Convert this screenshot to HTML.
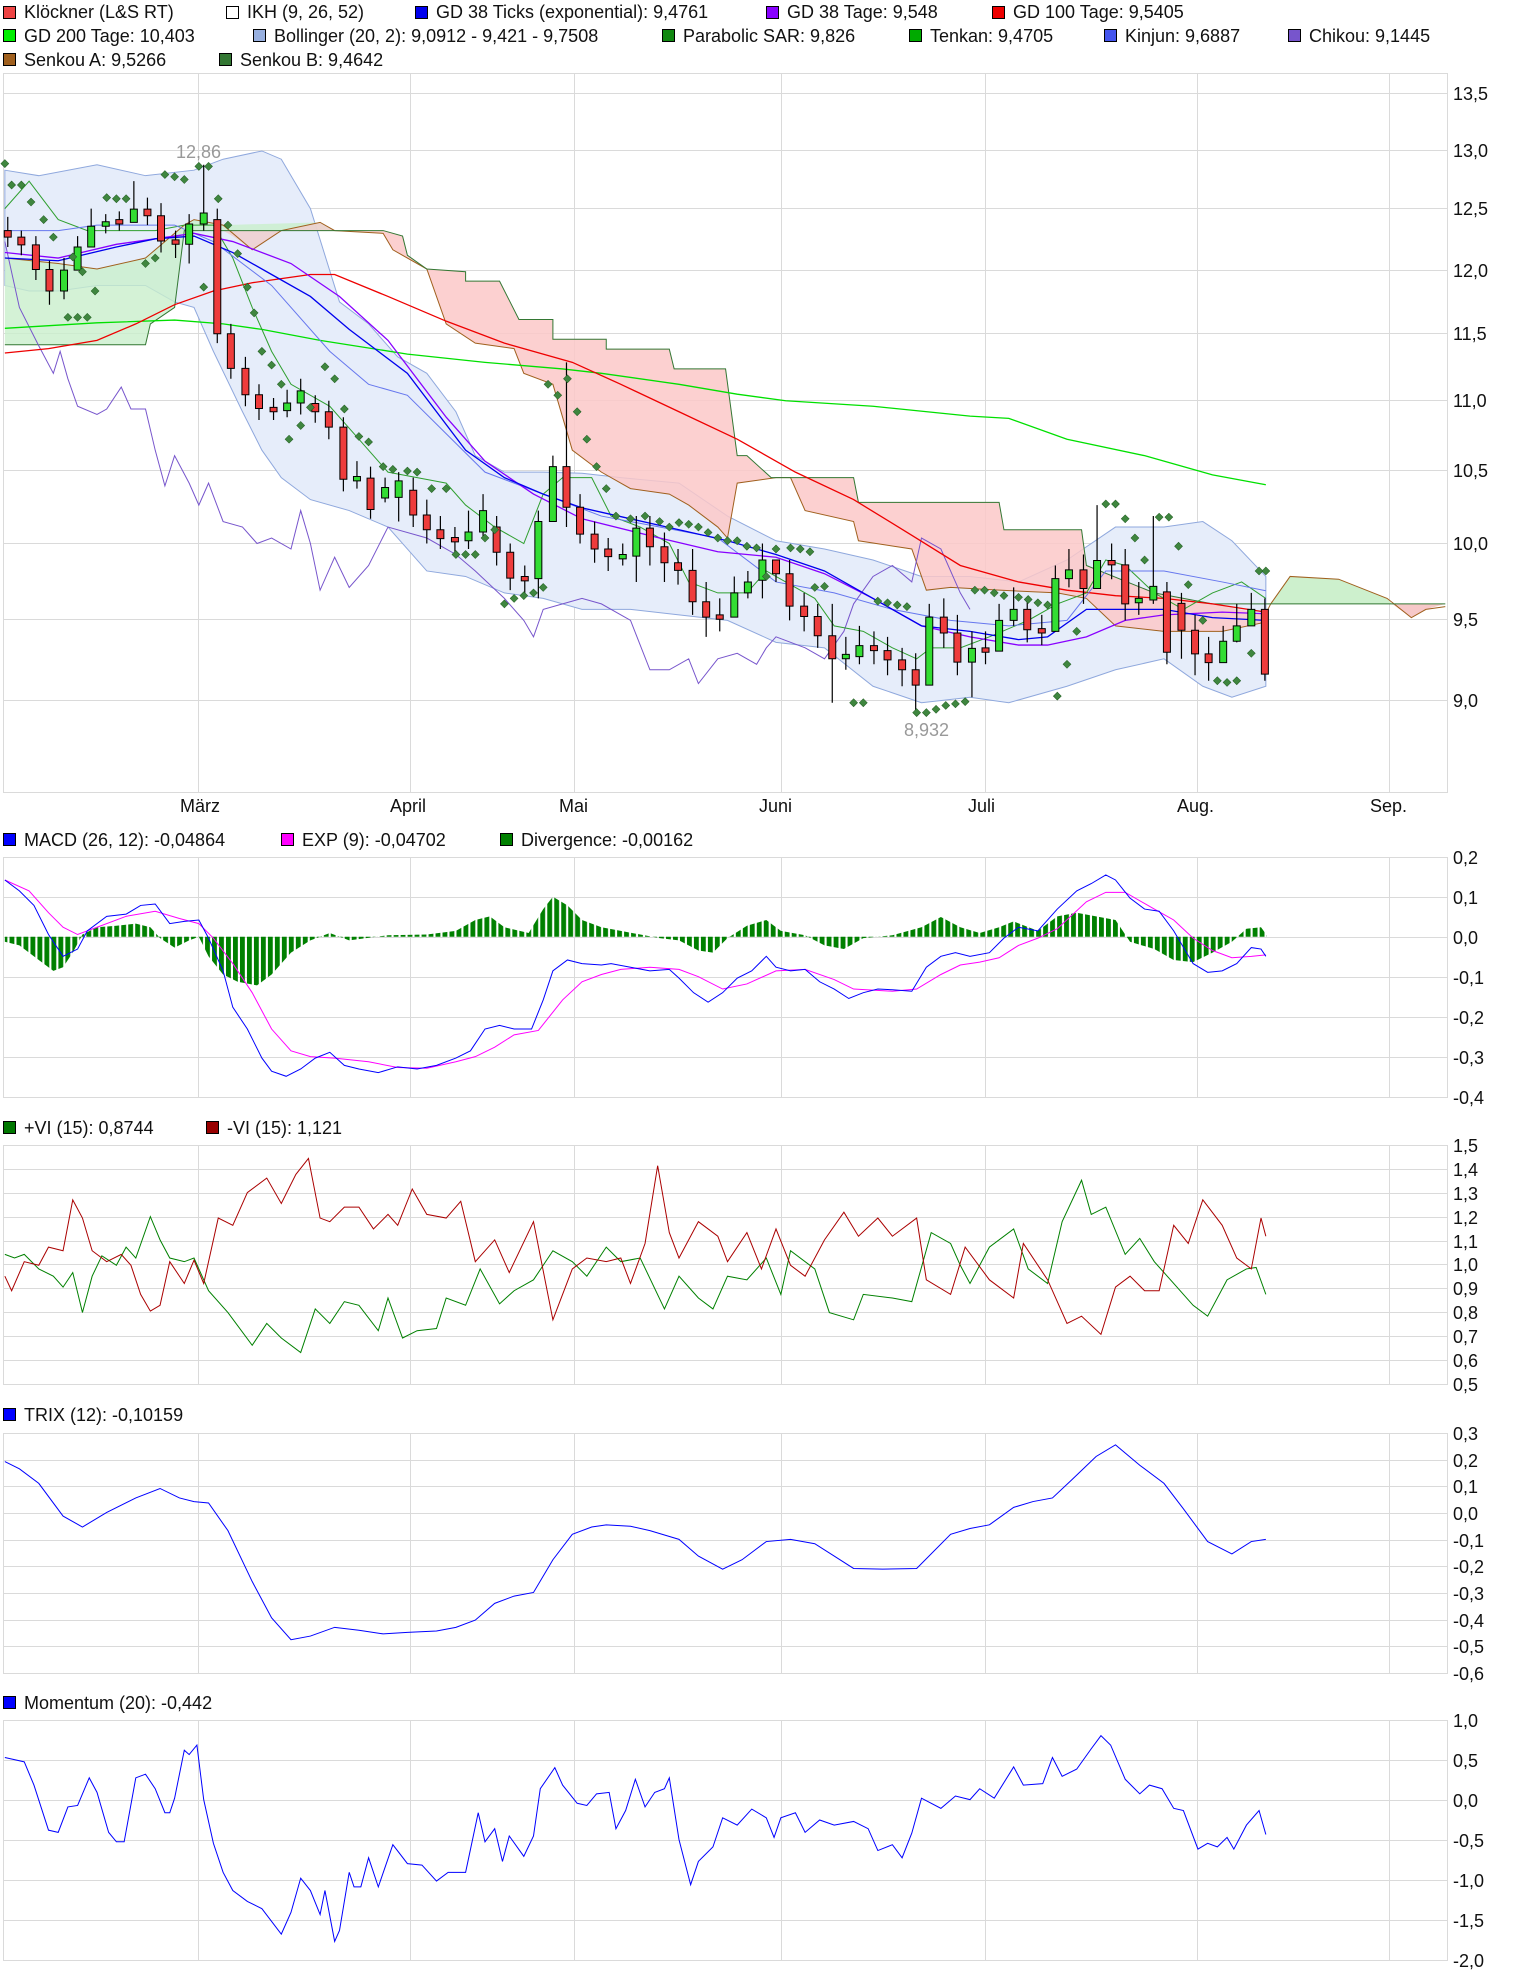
<!DOCTYPE html>
<html><head><meta charset="utf-8">
<style>
html,body{margin:0;padding:0;background:#fff;}
svg{display:block;}
text{font-family:"Liberation Sans",Arial,sans-serif;font-size:18px;fill:#111;}
.s *{vector-effect:non-scaling-stroke;}
.g{fill:#33dd33;stroke:#000;stroke-width:1;}
.r{fill:#ee3c3c;stroke:#000;stroke-width:1;}
</style></head>
<body>
<svg width="1520" height="1981" viewBox="0 0 1520 1981" xmlns="http://www.w3.org/2000/svg">
<defs>
<marker id="dm" markerUnits="userSpaceOnUse" markerWidth="20" markerHeight="30" refX="0" refY="0" overflow="visible" orient="0">
<path d="M0,-7.3 L4.12,0 L0,7.3 L-4.12,0Z" fill="#3f863f" stroke="#1d5a1d" stroke-width="0.6"/>
</marker>
<pattern id="bars" patternUnits="userSpaceOnUse" width="7.2" height="2000" x="2.6">
<rect x="0" y="0" width="5" height="2000" fill="#008000"/>
</pattern>
</defs>
<!-- legends -->
<g stroke="#000" stroke-width="1">
<rect x="3.5" y="6.5" width="12" height="12" fill="#ee4444"/>
<rect x="226.5" y="6.5" width="12" height="12" fill="#fff"/>
<rect x="415.5" y="6.5" width="12" height="12" fill="#0000ee"/>
<rect x="766.5" y="6.5" width="12" height="12" fill="#8800ff"/>
<rect x="992.5" y="6.5" width="12" height="12" fill="#ee0000"/>
<rect x="3.5" y="29.5" width="12" height="12" fill="#00ee00"/>
<rect x="253.5" y="29.5" width="12" height="12" fill="#98b0e0"/>
<rect x="662.5" y="29.5" width="12" height="12" fill="#118811"/>
<rect x="909.5" y="29.5" width="12" height="12" fill="#00aa00"/>
<rect x="1104.5" y="29.5" width="12" height="12" fill="#4455ee"/>
<rect x="1288.5" y="29.5" width="12" height="12" fill="#7755cc"/>
<rect x="3.5" y="53.5" width="12" height="12" fill="#a0601e"/>
<rect x="219.5" y="53.5" width="12" height="12" fill="#337733"/>
<rect x="3.5" y="833.5" width="12" height="12" fill="#0000ff"/>
<rect x="281.5" y="833.5" width="12" height="12" fill="#ff00ff"/>
<rect x="500.5" y="833.5" width="12" height="12" fill="#008000"/>
<rect x="3.5" y="1121.5" width="12" height="12" fill="#007700"/>
<rect x="206.5" y="1121.5" width="12" height="12" fill="#990000"/>
<rect x="3.5" y="1408.5" width="12" height="12" fill="#0000ff"/>
<rect x="3.5" y="1696.5" width="12" height="12" fill="#0000ff"/>
</g>
<text x="24" y="18">Klöckner (L&amp;S RT)</text>
<text x="247" y="18">IKH (9, 26, 52)</text>
<text x="436" y="18">GD 38 Ticks (exponential): 9,4761</text>
<text x="787" y="18">GD 38 Tage: 9,548</text>
<text x="1013" y="18">GD 100 Tage: 9,5405</text>
<text x="24" y="42">GD 200 Tage: 10,403</text>
<text x="274" y="42">Bollinger (20, 2): 9,0912 - 9,421 - 9,7508</text>
<text x="683" y="42">Parabolic SAR: 9,826</text>
<text x="930" y="42">Tenkan: 9,4705</text>
<text x="1125" y="42">Kinjun: 9,6887</text>
<text x="1309" y="42">Chikou: 9,1445</text>
<text x="24" y="66">Senkou A: 9,5266</text>
<text x="240" y="66">Senkou B: 9,4642</text>
<text x="24" y="846">MACD (26, 12): -0,04864</text>
<text x="302" y="846">EXP (9): -0,04702</text>
<text x="521" y="846">Divergence: -0,00162</text>
<text x="24" y="1134">+VI (15): 0,8744</text>
<text x="227" y="1134">-VI (15): 1,121</text>
<text x="24" y="1421">TRIX (12): -0,10159</text>
<text x="24" y="1709">Momentum (20): -0,442</text>

<!-- grids -->
<g stroke="#dadada" stroke-width="1" fill="none">
<path d="M3 93.5H1447M3 150.5H1447M3 208.5H1447M3 270.5H1447M3 333.5H1447M3 400.5H1447M3 470.5H1447M3 543.5H1447M3 619.5H1447M3 700.5H1447"/>
<path d="M3 897.5H1447M3 937.5H1447M3 977.5H1447M3 1017.5H1447M3 1057.5H1447"/>
<path d="M3 1169.5H1447M3 1193.5H1447M3 1217.5H1447M3 1241.5H1447M3 1264.5H1447M3 1288.5H1447M3 1312.5H1447M3 1336.5H1447M3 1360.5H1447"/>
<path d="M3 1460.5H1447M3 1486.5H1447M3 1513.5H1447M3 1540.5H1447M3 1566.5H1447M3 1593.5H1447M3 1620.5H1447M3 1646.5H1447"/>
<path d="M3 1760.5H1447M3 1800.5H1447M3 1840.5H1447M3 1880.5H1447M3 1920.5H1447"/>
<path d="M198.5 73V792M410.5 73V792M574.5 73V792M781.5 73V792M985.5 73V792M1197.5 73V792M1389.5 73V792"/>
<path d="M198.5 857V1097M410.5 857V1097M574.5 857V1097M781.5 857V1097M985.5 857V1097M1197.5 857V1097M1389.5 857V1097"/>
<path d="M198.5 1145V1384M410.5 1145V1384M574.5 1145V1384M781.5 1145V1384M985.5 1145V1384M1197.5 1145V1384M1389.5 1145V1384"/>
<path d="M198.5 1433V1673M410.5 1433V1673M574.5 1433V1673M781.5 1433V1673M985.5 1433V1673M1197.5 1433V1673M1389.5 1433V1673"/>
<path d="M198.5 1720V1960M410.5 1720V1960M574.5 1720V1960M781.5 1720V1960M985.5 1720V1960M1197.5 1720V1960M1389.5 1720V1960"/>
<rect x="3.5" y="73.5" width="1444" height="719"/>
<rect x="3.5" y="857.5" width="1444" height="240"/>
<rect x="3.5" y="1145.5" width="1444" height="239"/>
<rect x="3.5" y="1433.5" width="1444" height="240"/>
<rect x="3.5" y="1720.5" width="1444" height="240"/>
</g>

<!-- main chart data -->
<g class="s" transform="scale(0.97 0.549)">
<polygon fill="#e6edfa" stroke="#8fa8dd" stroke-width="1" points="5,310 40,320 100,300 150,320 200,310 230,290 270,275 290,290 320,380 350,550 380,590 410,650 440,680 470,750 490,830 520,860 560,860 600,862 640,870 700,880 750,940 800,985 850,1000 900,1020 950,1050 1000,1050 1050,1060 1100,1020 1150,960 1200,960 1240,950 1270,985 1305,1050 1305,1250 1270,1270 1240,1250 1200,1200 1150,1220 1100,1250 1040,1280 1000,1270 950,1280 900,1250 850,1180 800,1170 750,1130 700,1120 650,1110 600,1110 560,1090 520,1080 480,1050 440,1040 400,960 360,930 320,910 290,870 270,820 250,750 220,640 200,560 180,550 150,520 100,520 60,530 30,530 5,520"/>
<polygon fill="#c9efcc" fill-opacity="0.8" points="5,470 60,480 100,490 150,470 190,410 200,400 230,410 330,405 345,420 230,420 190,420 180,560 155,590 150,628 5,628"/>
<polygon fill="#f0cccc" fill-opacity="0.8" points="230,420 345,420 330,405 290,420 260,455 240,430"/>
<polygon fill="#fbc8c8" fill-opacity="0.85" points="345,420 395,420 415,430 420,465 440,490 480,495 480,512 515,512 535,582 570,582 570,618 625,618 625,636 690,636 695,672 748,672 760,830 770,830 795,870 880,870 885,915 1030,915 1035,965 1115,965 1120,1030 1190,1080 1250,1100 1305,1120 1300,1135 1260,1150 1200,1150 1150,1140 1120,1090 1090,1080 1030,1075 980,1070 955,1075 940,1000 885,985 880,950 830,930 815,870 800,870 760,880 750,980 740,960 710,920 690,900 650,890 620,860 590,820 570,700 540,680 530,635 490,625 460,590 440,490 420,470 405,455 395,425"/>
<polygon fill="#cdf0cd" points="1310,1100 1330,1050 1380,1055 1430,1090 1435,1100"/>
<polygon fill="#f6c8c8" points="1435,1100 1455,1125 1470,1110 1490,1100"/>
<polyline fill="none" stroke="#a0601e" stroke-width="1" points="5,470 60,480 100,490 150,470 190,410 200,400 230,410 260,455 290,420 330,405 345,420 395,425 405,455 420,470 440,490 460,590 490,625 530,635 540,680 570,700 590,820 620,860 650,890 690,900 710,920 740,960 750,980 760,880 800,870 815,870 830,930 880,950 885,985 940,1000 955,1075 980,1070 1030,1075 1090,1080 1120,1090 1150,1140 1200,1150 1260,1150 1300,1135 1310,1100 1330,1050 1380,1055 1430,1090 1455,1125 1470,1110 1490,1105"/>
<polyline fill="none" stroke="#337733" stroke-width="1" points="5,628 150,628 155,590 180,560 190,420 345,420 395,420 415,430 420,465 440,490 480,495 480,512 515,512 535,582 570,582 570,618 625,618 625,636 690,636 695,672 748,672 760,830 770,830 795,870 880,870 885,915 1030,915 1035,965 1115,965 1120,1030 1190,1080 1250,1100 1490,1100"/>
<polyline fill="none" stroke="#7755cc" stroke-width="1" points="5,440 20,560 40,630 55,680 62,640 70,690 80,740 100,755 110,745 125,705 135,745 150,745 160,820 170,885 180,830 195,880 205,920 215,880 230,950 250,960 265,990 280,980 300,1000 310,930 320,990 330,1075 345,1015 360,1070 380,1030 400,960 440,980 470,1010 490,1040 520,1090 540,1130 550,1160 560,1110 580,1100 600,1090 620,1100 650,1130 670,1220 690,1220 710,1200 720,1245 740,1200 760,1190 780,1210 790,1180 800,1160 830,1180 850,1200 870,1150 880,1100 900,1050 920,1030 940,1060 950,980 970,1000 990,1080 1000,1110"/>
<polyline fill="none" stroke="#00e000" stroke-width="1.3" points="5,598 100,588 180,583 230,590 270,600 330,620 420,645 500,660 580,672 620,680 700,700 760,718 810,730 900,740 1000,758 1040,762 1100,800 1180,830 1250,865 1305,883"/>
<polyline fill="none" stroke="#ee0000" stroke-width="1.3" points="5,643 50,635 100,620 140,590 180,555 220,530 260,515 300,505 320,500 345,500 400,540 460,585 520,625 590,660 640,700 700,750 760,800 820,860 880,910 940,975 990,1030 1050,1060 1100,1075 1150,1085 1200,1090 1250,1100 1305,1115"/>
<polyline fill="none" stroke="#2f9f2f" stroke-width="1" points="5,380 30,330 60,400 90,420 130,420 160,420 190,410 220,410 240,470 260,560 280,640 300,700 340,740 370,800 400,860 430,870 460,880 480,920 510,960 540,990 560,900 580,870 610,870 630,940 660,960 690,990 710,1060 740,1080 770,1080 790,1040 810,1060 840,1090 860,1140 890,1150 920,1180 945,1200 960,1180 990,1180 1020,1160 1060,1130 1090,1100 1120,1080 1140,1020 1160,1030 1190,1080 1220,1110 1250,1080 1280,1060 1305,1090"/>
<polyline fill="none" stroke="#6677ee" stroke-width="1" points="5,420 60,420 100,410 180,410 220,440 280,520 340,640 380,700 420,720 460,790 500,860 560,900 620,940 680,960 740,980 800,1060 860,1080 920,1110 980,1130 1040,1140 1100,1130 1140,1040 1200,1040 1260,1060 1305,1076"/>
<polyline fill="none" stroke="#8800ff" stroke-width="1.3" points="5,460 60,470 120,445 160,435 200,425 240,440 300,480 350,540 400,620 460,760 500,840 550,900 600,945 680,980 740,1005 800,1015 850,1045 900,1090 950,1140 1000,1160 1050,1175 1080,1175 1120,1160 1160,1130 1200,1120 1260,1115 1305,1118"/>
<polyline fill="none" stroke="#0000ee" stroke-width="1.3" points="5,470 60,475 120,450 160,435 200,430 240,460 280,500 320,540 360,600 420,680 480,820 520,870 560,900 600,925 650,945 700,965 750,985 800,1010 850,1040 900,1090 950,1140 1000,1150 1050,1165 1080,1160 1120,1110 1150,1110 1200,1110 1250,1125 1305,1130"/>
<!-- wicks -->
<path fill="none" stroke="#000" stroke-width="1.2" d="M8 395V450M22 420V465M37 430V510M51 475V555M66 470V545M80 430V470M94 380V430M109 390V425M123 385V420M138 330V400M152 360V410M166 370V460M181 420V470M195 390V480M210 300V420M224 380V625M238 590V690M253 650V740M267 700V765M282 725V765M296 710V760M310 690V755M325 720V770M339 730V800M354 760V895M368 840V890M382 850V945M397 870V915M411 860V950M426 870V960M440 910V990M454 940V1000M469 960V1005M483 930V1000M498 900V980M512 940V1030M526 990V1075M541 1030V1080M555 930V1090M570 830V880M584 660V960M598 900V990M613 950V1025M627 980V1040M642 990V1030M656 940V1060M670 940V1030M685 970V1060M699 1000V1065M714 1000V1120M728 1060V1160M742 1090V1150M757 1050V1110M771 1040V1090M786 990V1090M800 1020V1060M814 1020V1130M829 1080V1150M843 1100V1180M858 1100V1280M872 1160V1220M886 1140V1210M901 1150V1210M915 1160V1230M930 1180V1250M944 1190V1300M958 1100V1190M973 1090V1180M987 1120V1230M1002 1150V1270M1016 1150V1210M1030 1100V1160M1045 1070V1140M1059 1090V1170M1074 1120V1175M1088 1030V1080M1102 1000V1070M1117 1010V1100M1131 920V1050M1146 990V1055M1160 1000V1130M1174 1060V1120M1189 940V1100M1203 1060V1210M1218 1080V1200M1232 1120V1230M1246 1160V1240M1261 1140V1200M1275 1100V1170M1290 1080V1140M1304 1090V1240"/>
<g>
<rect class="r" x="4.4" y="420" width="7.2" height="12"/>
<rect class="r" x="18.4" y="432" width="7.2" height="14"/>
<rect class="r" x="33.4" y="446" width="7.2" height="45"/>
<rect class="r" x="47.4" y="491" width="7.2" height="39"/>
<rect class="g" x="62.4" y="492" width="7.2" height="38"/>
<rect class="g" x="76.4" y="450" width="7.2" height="42"/>
<rect class="g" x="90.4" y="412" width="7.2" height="38"/>
<rect class="g" x="105.4" y="404" width="7.2" height="8"/>
<rect class="r" x="119.4" y="400" width="7.2" height="8"/>
<rect class="g" x="134.4" y="381" width="7.2" height="24"/>
<rect class="r" x="148.4" y="381" width="7.2" height="12"/>
<rect class="r" x="162.4" y="393" width="7.2" height="46"/>
<rect class="r" x="177.4" y="437" width="7.2" height="8"/>
<rect class="g" x="191.4" y="408" width="7.2" height="37"/>
<rect class="g" x="206.4" y="388" width="7.2" height="20"/>
<rect class="r" x="220.4" y="400" width="7.2" height="208"/>
<rect class="r" x="234.4" y="608" width="7.2" height="63"/>
<rect class="r" x="249.4" y="671" width="7.2" height="48"/>
<rect class="r" x="263.4" y="719" width="7.2" height="25"/>
<rect class="r" x="278.4" y="742" width="7.2" height="8"/>
<rect class="g" x="292.4" y="734" width="7.2" height="14"/>
<rect class="g" x="306.4" y="712" width="7.2" height="22"/>
<rect class="r" x="321.4" y="735" width="7.2" height="15"/>
<rect class="r" x="335.4" y="750" width="7.2" height="28"/>
<rect class="r" x="350.4" y="778" width="7.2" height="95"/>
<rect class="g" x="364.4" y="868" width="7.2" height="8"/>
<rect class="r" x="378.4" y="871" width="7.2" height="57"/>
<rect class="g" x="393.4" y="888" width="7.2" height="19"/>
<rect class="g" x="407.4" y="876" width="7.2" height="30"/>
<rect class="r" x="422.4" y="893" width="7.2" height="45"/>
<rect class="r" x="436.4" y="938" width="7.2" height="27"/>
<rect class="r" x="450.4" y="965" width="7.2" height="16"/>
<rect class="r" x="465.4" y="979" width="7.2" height="8"/>
<rect class="g" x="479.4" y="969" width="7.2" height="16"/>
<rect class="g" x="494.4" y="930" width="7.2" height="39"/>
<rect class="r" x="508.4" y="960" width="7.2" height="46"/>
<rect class="r" x="522.4" y="1006" width="7.2" height="47"/>
<rect class="r" x="537.4" y="1050" width="7.2" height="8"/>
<rect class="g" x="551.4" y="950" width="7.2" height="104"/>
<rect class="g" x="566.4" y="850" width="7.2" height="100"/>
<rect class="r" x="580.4" y="850" width="7.2" height="74"/>
<rect class="r" x="594.4" y="924" width="7.2" height="49"/>
<rect class="r" x="609.4" y="973" width="7.2" height="27"/>
<rect class="r" x="623.4" y="1000" width="7.2" height="14"/>
<rect class="g" x="638.4" y="1010" width="7.2" height="8"/>
<rect class="g" x="652.4" y="962" width="7.2" height="51"/>
<rect class="r" x="666.4" y="962" width="7.2" height="34"/>
<rect class="r" x="681.4" y="996" width="7.2" height="29"/>
<rect class="r" x="695.4" y="1025" width="7.2" height="14"/>
<rect class="r" x="710.4" y="1039" width="7.2" height="57"/>
<rect class="r" x="724.4" y="1096" width="7.2" height="28"/>
<rect class="r" x="738.4" y="1120" width="7.2" height="8"/>
<rect class="g" x="753.4" y="1080" width="7.2" height="44"/>
<rect class="g" x="767.4" y="1060" width="7.2" height="20"/>
<rect class="g" x="782.4" y="1020" width="7.2" height="37"/>
<rect class="r" x="796.4" y="1020" width="7.2" height="25"/>
<rect class="r" x="810.4" y="1045" width="7.2" height="59"/>
<rect class="r" x="825.4" y="1104" width="7.2" height="19"/>
<rect class="r" x="839.4" y="1123" width="7.2" height="35"/>
<rect class="r" x="854.4" y="1158" width="7.2" height="42"/>
<rect class="g" x="868.4" y="1192" width="7.2" height="8"/>
<rect class="g" x="882.4" y="1176" width="7.2" height="20"/>
<rect class="r" x="897.4" y="1176" width="7.2" height="9"/>
<rect class="r" x="911.4" y="1185" width="7.2" height="17"/>
<rect class="r" x="926.4" y="1202" width="7.2" height="18"/>
<rect class="r" x="940.4" y="1220" width="7.2" height="28"/>
<rect class="g" x="954.4" y="1124" width="7.2" height="124"/>
<rect class="r" x="969.4" y="1124" width="7.2" height="29"/>
<rect class="r" x="983.4" y="1153" width="7.2" height="53"/>
<rect class="g" x="998.4" y="1181" width="7.2" height="25"/>
<rect class="r" x="1012.4" y="1180" width="7.2" height="8"/>
<rect class="g" x="1026.4" y="1130" width="7.2" height="56"/>
<rect class="g" x="1041.4" y="1110" width="7.2" height="20"/>
<rect class="r" x="1055.4" y="1110" width="7.2" height="37"/>
<rect class="r" x="1070.4" y="1145" width="7.2" height="8"/>
<rect class="g" x="1084.4" y="1054" width="7.2" height="96"/>
<rect class="g" x="1098.4" y="1038" width="7.2" height="16"/>
<rect class="r" x="1113.4" y="1038" width="7.2" height="34"/>
<rect class="g" x="1127.4" y="1021" width="7.2" height="51"/>
<rect class="r" x="1142.4" y="1021" width="7.2" height="8"/>
<rect class="r" x="1156.4" y="1029" width="7.2" height="71"/>
<rect class="g" x="1170.4" y="1090" width="7.2" height="8"/>
<rect class="g" x="1185.4" y="1068" width="7.2" height="25"/>
<rect class="r" x="1199.4" y="1078" width="7.2" height="110"/>
<rect class="r" x="1214.4" y="1099" width="7.2" height="49"/>
<rect class="r" x="1228.4" y="1148" width="7.2" height="43"/>
<rect class="r" x="1242.4" y="1191" width="7.2" height="16"/>
<rect class="g" x="1257.4" y="1168" width="7.2" height="39"/>
<rect class="g" x="1271.4" y="1140" width="7.2" height="28"/>
<rect class="g" x="1286.4" y="1110" width="7.2" height="30"/>
<rect class="r" x="1300.4" y="1110" width="7.2" height="118"/>
</g>
<!-- SAR -->
<polyline fill="none" stroke="none" marker-start="url(#dm)" marker-mid="url(#dm)" marker-end="url(#dm)" points="5,298 12,337 22,337 32,368 45,400 55,432 75,468 85,495 98,530 70,578 80,578 90,578 110,360 120,362 130,362 150,480 160,470 170,318 180,322 190,327 205,303 215,303 210,523 225,362 235,410 245,462 255,523 262,570 270,640 280,665 290,700 298,800 310,775 320,742 335,668 345,690 355,745 370,795 380,805 395,850 405,855 420,858 430,860 445,890 460,890 470,1010 480,1010 490,1010 500,980 510,965 520,1100 530,1090 540,1085 550,1080 560,1070 565,700 575,720 585,690 595,750 605,800 615,850 625,890 635,940 650,945 665,940 680,950 690,960 700,952 710,955 720,960 730,970 740,980 750,985 760,985 770,995 780,998 790,1050 800,1000 815,998 825,1000 835,1005 840,1070 850,1068 880,1280 890,1280 905,1095 915,1098 925,1102 935,1105 945,1298 955,1298 965,1292 975,1285 985,1282 995,1278 1005,1075 1015,1075 1025,1080 1035,1085 1050,1088 1060,1092 1070,1098 1080,1102 1090,1268 1100,1210 1110,1150 1140,918 1150,918 1160,945 1170,980 1180,1020 1195,942 1205,942 1215,995 1225,1065 1240,1130 1255,1240 1265,1243 1275,1240 1290,1190 1298,1040 1305,1040"/>
</g>
<text x="176" y="158" style="fill:#999">12,86</text>
<text x="904" y="736" style="fill:#999">8,932</text>

<!-- lower panels -->
<g class="s" transform="translate(0 840) scale(0.97 0.727)">
<polygon fill="url(#bars)" points="5,133 5,140 20,145 40,165 55,180 65,175 75,155 85,130 100,120 120,118 140,115 155,120 165,135 180,148 195,138 205,133 215,160 230,185 245,195 265,200 280,185 300,155 320,138 340,128 360,138 400,131 440,130 470,125 490,110 505,105 520,120 545,128 560,95 570,78 585,90 600,110 620,120 640,125 680,135 700,138 720,152 735,155 750,135 770,118 790,110 805,125 830,131 850,145 870,150 890,135 920,131 950,120 970,106 990,120 1010,128 1030,120 1045,112 1070,125 1090,105 1110,100 1130,105 1150,110 1165,140 1190,150 1210,165 1230,168 1250,155 1270,140 1285,122 1300,120 1306,131 1306,133"/>
<polyline fill="none" stroke="#ff00ff" stroke-width="1" points="5,55 30,70 50,100 65,120 80,130 100,120 130,105 160,98 185,108 205,115 220,135 240,170 260,210 280,260 300,290 320,298 345,300 380,305 410,313 440,314 470,305 490,298 510,285 530,268 555,262 580,220 600,195 620,185 640,178 670,175 700,178 720,188 745,205 770,198 800,180 830,178 860,192 880,205 920,208 945,205 970,185 990,172 1010,168 1030,162 1050,145 1070,135 1090,122 1120,85 1140,72 1160,72 1190,95 1210,110 1230,135 1250,152 1270,162 1290,160 1305,158"/>
<polyline fill="none" stroke="#0000ff" stroke-width="1" points="5,55 20,70 35,90 50,130 65,160 80,150 90,125 110,105 130,102 145,90 160,88 175,115 190,112 205,110 215,135 230,180 240,230 255,260 270,300 280,318 295,325 310,315 325,300 340,292 355,310 370,315 390,320 410,312 430,315 450,310 470,300 485,290 500,260 515,255 530,260 548,260 560,220 570,180 585,165 600,170 620,172 630,170 650,175 670,180 690,178 700,190 715,210 730,223 745,210 760,190 775,180 790,160 800,175 815,180 830,178 845,195 860,205 875,218 890,210 905,205 920,206 940,208 955,175 970,160 985,155 1000,160 1020,155 1035,135 1050,120 1070,125 1090,95 1110,70 1125,60 1140,48 1150,55 1165,80 1180,95 1195,98 1210,125 1230,170 1245,182 1260,180 1275,170 1290,148 1300,150 1305,160"/>
<polyline fill="none" stroke="#008000" stroke-width="1" points="5,570 15,575 25,570 40,590 55,600 65,615 75,595 85,650 95,600 105,572 120,585 130,560 140,575 155,518 165,550 175,575 190,580 200,575 215,620 235,650 260,695 275,665 290,685 310,705 325,645 340,665 355,635 370,640 390,675 400,630 415,685 430,675 450,672 460,630 480,640 495,590 515,638 530,620 550,605 570,565 590,580 605,600 625,560 640,580 660,575 685,645 700,600 720,630 735,645 750,600 770,605 790,575 805,625 815,565 840,590 855,650 880,660 890,625 920,630 940,635 960,540 980,555 990,585 1000,610 1020,560 1045,535 1060,590 1080,610 1095,525 1115,468 1125,515 1140,505 1160,570 1175,548 1190,580 1210,610 1230,640 1245,655 1265,605 1285,590 1295,588 1305,625"/>
<polyline fill="none" stroke="#aa0000" stroke-width="1" points="5,600 12,620 25,580 40,585 50,560 65,565 75,495 85,520 95,565 110,580 125,570 135,585 145,625 155,648 165,640 175,580 190,610 200,578 210,610 225,520 240,530 255,485 275,465 290,500 305,460 318,438 330,520 340,525 355,505 370,505 385,535 400,515 410,530 425,480 440,515 460,520 475,497 490,580 510,550 525,595 550,525 570,660 590,590 605,575 625,580 640,575 650,610 665,555 678,448 690,540 700,575 720,525 740,545 750,580 770,540 785,590 800,535 815,585 830,600 850,550 870,512 885,545 905,520 920,545 945,520 955,605 980,625 995,560 1020,605 1045,630 1055,555 1080,605 1100,665 1115,655 1135,680 1150,615 1165,600 1180,620 1195,620 1210,530 1225,555 1240,495 1260,530 1275,575 1290,590 1300,520 1305,545"/>
<polyline fill="none" stroke="#0000ff" stroke-width="1" points="5,855 20,865 40,885 65,930 85,945 110,925 140,905 165,892 185,905 200,910 215,912 235,950 260,1020 280,1070 300,1100 320,1095 345,1083 370,1087 395,1092 420,1090 450,1088 470,1083 490,1073 510,1050 530,1040 550,1035 570,990 590,955 610,945 625,942 650,944 670,950 700,962 720,985 745,1003 765,990 790,965 815,962 840,968 860,985 880,1002 910,1003 945,1002 980,955 1000,947 1020,942 1045,918 1065,910 1085,905 1105,880 1130,848 1150,832 1175,860 1200,885 1220,920 1245,965 1270,982 1290,965 1305,962"/>
<polyline fill="none" stroke="#0000ff" stroke-width="1" points="5,1262 25,1268 35,1300 50,1362 60,1365 70,1330 80,1328 92,1290 100,1310 112,1365 120,1378 128,1378 140,1290 150,1285 160,1305 170,1338 175,1338 180,1318 190,1252 195,1258 203,1245 210,1320 220,1380 230,1420 240,1445 255,1460 270,1470 290,1505 300,1475 310,1428 320,1445 330,1478 335,1445 345,1515 350,1500 360,1420 365,1440 372,1440 380,1400 390,1440 405,1382 420,1408 435,1410 450,1432 462,1420 480,1420 493,1338 500,1378 510,1360 518,1405 525,1370 540,1398 550,1370 557,1305 572,1276 580,1300 595,1325 605,1328 615,1312 628,1310 635,1360 645,1335 655,1292 665,1330 675,1310 685,1305 690,1290 700,1375 712,1437 720,1405 735,1385 745,1345 760,1355 775,1333 790,1345 798,1372 805,1345 820,1338 830,1365 845,1348 860,1355 880,1350 895,1360 905,1390 920,1382 930,1400 940,1366 950,1318 970,1332 985,1315 1000,1320 1010,1305 1025,1318 1045,1275 1055,1300 1075,1298 1085,1262 1095,1288 1110,1278 1125,1250 1135,1232 1145,1245 1160,1292 1175,1312 1185,1300 1198,1305 1210,1332 1220,1335 1235,1388 1245,1380 1255,1385 1265,1372 1272,1388 1285,1355 1298,1335 1305,1368"/>
</g>

<!-- axis labels -->
<text x="1453" y="100">13,5</text><text x="1453" y="157">13,0</text><text x="1453" y="215">12,5</text><text x="1453" y="277">12,0</text><text x="1453" y="340">11,5</text><text x="1453" y="407">11,0</text><text x="1453" y="477">10,5</text><text x="1453" y="550">10,0</text><text x="1453" y="626">9,5</text><text x="1453" y="707">9,0</text>
<text x="180" y="812">März</text><text x="390" y="812">April</text><text x="559" y="812">Mai</text><text x="759" y="812">Juni</text><text x="968" y="812">Juli</text><text x="1177" y="812">Aug.</text><text x="1370" y="812">Sep.</text>
<text x="1453" y="864">0,2</text><text x="1453" y="904">0,1</text><text x="1453" y="944">0,0</text><text x="1453" y="984">-0,1</text><text x="1453" y="1024">-0,2</text><text x="1453" y="1064">-0,3</text><text x="1453" y="1104">-0,4</text>
<text x="1453" y="1152">1,5</text><text x="1453" y="1176">1,4</text><text x="1453" y="1200">1,3</text><text x="1453" y="1224">1,2</text><text x="1453" y="1248">1,1</text><text x="1453" y="1271">1,0</text><text x="1453" y="1295">0,9</text><text x="1453" y="1319">0,8</text><text x="1453" y="1343">0,7</text><text x="1453" y="1367">0,6</text><text x="1453" y="1391">0,5</text>
<text x="1453" y="1440">0,3</text><text x="1453" y="1467">0,2</text><text x="1453" y="1493">0,1</text><text x="1453" y="1520">0,0</text><text x="1453" y="1547">-0,1</text><text x="1453" y="1573">-0,2</text><text x="1453" y="1600">-0,3</text><text x="1453" y="1627">-0,4</text><text x="1453" y="1653">-0,5</text><text x="1453" y="1680">-0,6</text>
<text x="1453" y="1727">1,0</text><text x="1453" y="1767">0,5</text><text x="1453" y="1807">0,0</text><text x="1453" y="1847">-0,5</text><text x="1453" y="1887">-1,0</text><text x="1453" y="1927">-1,5</text><text x="1453" y="1967">-2,0</text>
</svg>
</body></html>
